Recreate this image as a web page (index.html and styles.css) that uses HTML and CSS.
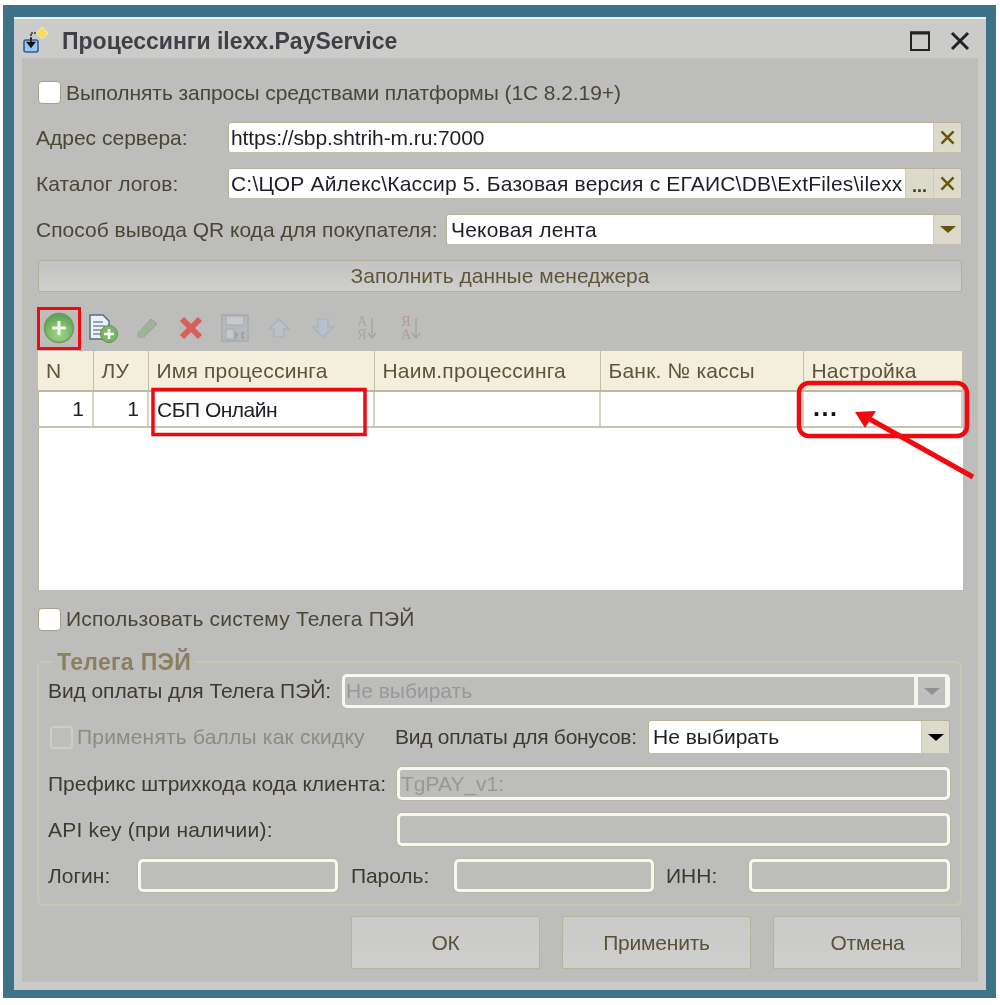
FILE: index.html
```html
<!DOCTYPE html>
<html lang="ru">
<head>
<meta charset="utf-8">
<title>Процессинги ilexx.PayService</title>
<link rel="stylesheet" href="styles.css">
</head>
<body>
<div class="shot">
  <div class="frame">
    <div class="window">
      <header class="titlebar">
        <svg class="title-icon" width="30" height="30" viewBox="0 0 30 30">
          <path d="M15 7h-5v7" fill="none" stroke="#333" stroke-width="1.6" stroke-dasharray="2 1"/>
          <rect x="3" y="14" width="14" height="12" rx="2" fill="#9cc4e8" stroke="#2b5f96" stroke-width="1.6"/>
          <path d="M10 12v7M6.500 16.500 10 21l3.500-4.500z" fill="#111" stroke="#111" stroke-width="1.400"/>
          <path d="M21 1l6 6-6 6-6-6z" fill="#f7dc5a" stroke="#efe9b8"/>
        </svg>
        <h1 class="title">Процессинги ilexx.PayService</h1>
        <svg class="win-btn" width="20" height="20" viewBox="0 0 20 20"><rect x="1" y="1.500" width="18" height="17.500" fill="none" stroke="#222" stroke-width="2"/><path d="M0 2h20" stroke="#222" stroke-width="3"/></svg>
        <svg class="win-btn" width="20" height="20" viewBox="0 0 20 20"><path d="M2 2l16 16M18 2 2 18" stroke="#222" stroke-width="3"/></svg>
      </header>
      <main class="panel">
        <label class="check-row first">
          <span class="check"></span><span class="cap sn1">Выполнять запросы средствами платформы (1С 8.2.19+)</span>
        </label>
        <div class="row r-addr">
          <span class="label w190">Адрес сервера:</span>
          <div class="field">
            <span class="value sn1">https://sbp.shtrih-m.ru:7000</span>
            <span class="f-btn"><svg width="15" height="15" viewBox="0 0 16 16"><path d="M1.500 1.500l13 13M14.500 1.500l-13 13" stroke="#6b5608" stroke-width="2.600"/></svg></span>
          </div>
        </div>
        <div class="row r-gap">
          <span class="label w190">Каталог логов:</span>
          <div class="field">
            <span class="value sp2">C:\ЦОР Айлекс\Кассир 5. Базовая версия с ЕГАИС\DB\ExtFiles\ilexx</span>
            <span class="f-btn dots">...</span>
            <span class="f-btn"><svg width="15" height="15" viewBox="0 0 16 16"><path d="M1.500 1.500l13 13M14.500 1.500l-13 13" stroke="#6b5608" stroke-width="2.600"/></svg></span>
          </div>
        </div>
        <div class="row r-gap">
          <span class="label w408">Способ вывода QR кода для покупателя:</span>
          <div class="field">
            <span class="value pad sp2">Чековая лента</span>
            <span class="f-btn"><i class="tri olive"></i></span>
          </div>
        </div>
        <button class="wide-btn">Заполнить данные менеджера</button>

        <div class="toolbar">
          <span class="tool">
            <svg width="32" height="32" viewBox="0 0 32 32"><defs><radialGradient id="gr" cx="50%" cy="70%" r="65%"><stop offset="0" stop-color="#a4d88c"/><stop offset="1" stop-color="#62a256"/></radialGradient></defs><circle cx="16" cy="16" r="14.500" fill="url(#gr)" stroke="#6d9a62" stroke-width="1.500"/><path d="M16 9v14M9 16h14" stroke="#f2f7ec" stroke-width="3"/></svg>
          </span>
          <span class="tool">
            <svg width="32" height="30" viewBox="0 0 32 30"><path d="M3 2h13l6 6v18H3z" fill="#eef1f3" stroke="#4f6f8f" stroke-width="1.500"/><path d="M6 9h10M6 13h12M6 17h9M6 21h9" stroke="#7d8a96" stroke-width="1.500"/><circle cx="22" cy="21" r="8.500" fill="#79b765" stroke="#5c8f50"/><path d="M22 16v10M17 21h10" stroke="#fff" stroke-width="2.600"/></svg>
          </span>
          <span class="tool">
            <svg width="24" height="24" viewBox="0 0 24 24"><path d="M3 17 16 3l6 5L9 21H3z" fill="#9fb39b" stroke="#93a58f"/><path d="M3 21h7" stroke="#a9a9a9" stroke-width="2"/></svg>
          </span>
          <span class="tool">
            <svg width="26" height="24" viewBox="0 0 26 24"><path d="M4 3l18 18M22 3 4 21" stroke="#d9605a" stroke-width="6"/></svg>
          </span>
          <span class="tool">
            <svg width="30" height="30" viewBox="0 0 30 30"><path d="M2 2h26v26H2z" fill="#b5b9bb" stroke="#a5aaad" stroke-width="1.500"/><path d="M6 3h18v9H6z" fill="#c6c8c9" stroke="#a5aaad"/><path d="M6 16h8v10H6z" fill="#c5c7c8" stroke="#a5aaad"/><path d="M16 19v7M22 19v7M16 22h2M24 19l-2 3 2 4" fill="none" stroke="#9b9fa2" stroke-width="1.500"/></svg>
          </span>
          <span class="tool">
            <svg width="24" height="22" viewBox="0 0 24 22"><path d="M12 2 22 12h-5v8H7v-8H2z" fill="#bac2c8" stroke="#aab3ba" stroke-width="1.500"/></svg>
          </span>
          <span class="tool">
            <svg width="24" height="22" viewBox="0 0 24 22"><path d="M12 20 22 10h-5V2H7v8H2z" fill="#b5c2cb" stroke="#a8b5be" stroke-width="1.500"/></svg>
          </span>
          <span class="tool sort"><span class="sort-l"><b>А</b><b>Я</b></span><svg width="10" height="24" viewBox="0 0 10 24"><path d="M5 2v20M1 17l4 5 4-5" fill="none" stroke="#a3a8a6" stroke-width="1.500"/></svg></span>
          <span class="tool sort rev"><span class="sort-l"><b>Я</b><b>А</b></span><svg width="10" height="24" viewBox="0 0 10 24"><path d="M5 2v20M1 17l4 5 4-5" fill="none" stroke="#a3a8a6" stroke-width="1.500"/></svg></span>
        </div>

        <table class="grid">
          <colgroup>
            <col class="c1"><col class="c2"><col class="c3"><col class="c4"><col class="c5"><col class="c6">
          </colgroup>
          <thead>
            <tr><th>N</th><th>ЛУ</th><th>Имя процессинга</th><th>Наим.процессинга</th><th>Банк. № кассы</th><th>Настройка</th></tr>
          </thead>
          <tbody>
            <tr><td class="num">1</td><td class="num">1</td><td class="name">СБП Онлайн</td><td></td><td></td><td class="more">...</td></tr>
          </tbody>
        </table>

        <label class="check-row second">
          <span class="check"></span><span class="sp2">Использовать систему Телега ПЭЙ</span>
        </label>

        <fieldset class="group">
          <legend>Телега ПЭЙ</legend>
          <div class="row g-first">
            <span class="label dark w294 sn1">Вид оплаты для Телега ПЭЙ:</span>
            <div class="field off select-off">
              <span class="value">Не выбирать</span>
              <span class="f-btn"><i class="tri gray"></i></span>
            </div>
          </div>
          <div class="row g-gap">
            <span class="check faded"></span>
            <span class="label fade w318 sp2">Применять баллы как скидку</span>
            <span class="label dark w253 sn2">Вид оплаты для бонусов:</span>
            <div class="field">
              <span class="value pad">Не выбирать</span>
              <span class="f-btn"><i class="tri black"></i></span>
            </div>
          </div>
          <div class="row g-gap g-h">
            <span class="label dark w349">Префикс штрихкода кода клиента:</span>
            <div class="field off"><span class="value">TgPAY_v1:</span></div>
          </div>
          <div class="row g-gap g-h">
            <span class="label dark w349 sp2">API key (при наличии):</span>
            <div class="field off"></div>
          </div>
          <div class="row g-gap g-h">
            <span class="label dark w90">Логин:</span>
            <div class="field off small"></div>
            <span class="label dark w103 ml sn1">Пароль:</span>
            <div class="field off small"></div>
            <span class="label dark w83 ml">ИНН:</span>
            <div class="field off small2"></div>
          </div>
        </fieldset>

        <div class="actions">
          <button class="act">ОК</button>
          <button class="act">Применить</button>
          <button class="act">Отмена</button>
        </div>
      </main>
    </div>
  </div>
  <svg class="notes" width="1000" height="1005" viewBox="0 0 1000 1005">
    <g fill="none" stroke="#f00a0f">
      <rect x="38.500" y="308.500" width="41" height="40" stroke-width="3"/>
      <rect x="153" y="389.500" width="212" height="45" stroke-width="3.500"/>
      <rect x="799" y="383" width="168" height="53" rx="10" stroke-width="4.500"/>
      <path d="M973 477 866 417" stroke-width="5"/>
    </g>
    <path d="M855 412l21-1-11 17z" fill="#f00a0f"/>
  </svg>
</div>
</body>
</html>
```
FILE: styles.css
```css
* { box-sizing: border-box; }
html, body { margin: 0; padding: 0; background: #fff; }
body { width: 1000px; height: 1005px; overflow: hidden; font-family: "Liberation Sans", Arial, sans-serif; font-size: 21px; color: #4b4534; }
.shot { position: relative; display: flow-root; width: 1000px; height: 1005px; filter: blur(0.5px); }
.frame { margin: 5px 4px 0 3px; height: 993px; border-style: solid; border-color: #3d7288; border-width: 12px 10px 8px 11px; }
.window { height: 100%; background: #cbcbca; border-top: 2px solid #eef1f1; display: flex; flex-direction: column; }
.titlebar { height: 39px; flex: none; display: flex; align-items: center; padding: 4px 16px 0 7px; }
.title-icon { flex: none; }
.title { flex: 1; margin: 2px 0 0 11px; font-size: 23px; font-weight: bold; color: #3f3f46; }
.win-btn { margin-left: 20px; flex: none; }
.panel { flex: 1; margin: 0 8px 8px; padding: 23px 16px 0; background: #bdbdbc; }

.sp2 { letter-spacing: .2px; }
.sn1 { letter-spacing: -.08px; }
.sn2 { letter-spacing: -.25px; }
.cap { margin-top: 2px; }

.check-row { display: flex; align-items: center; height: 22px; }
.check { flex: none; width: 23px; height: 23px; margin-right: 5px; background: #fff; border: 1px solid #a79f88; border-radius: 4px; }
.check.faded { background: #bdbdbc; border: 2px solid #cfcdbd; margin: 0 4px 0 2px; }
.check-row.second { margin-top: 17px; height: 24px; }

.row { display: flex; align-items: center; height: 31px; }
.r-addr { margin-top: 19px; }
.r-gap { margin-top: 15px; }
.label { flex: none; white-space: nowrap; margin-left: -2px; margin-right: 2px; }
.w190 { width: 190px; }
.w408 { width: 408px; }
.w294 { width: 294px; margin-left: 0; margin-right: 0; }
.w318 { width: 318px; margin-left: 0; margin-right: 0; }
.w253 { width: 253px; margin-left: 0; margin-right: 0; }
.w349 { width: 349px; margin-left: 0; margin-right: 0; }
.w90 { width: 90px; margin-left: 0; margin-right: 0; }
.w103 { width: 103px; margin-left: 0; margin-right: 0; }
.w83 { width: 83px; margin-left: 0; margin-right: 0; }
.label.ml { margin-left: 13px; }
.label.w83.ml { margin-left: 12px; }
.dark { color: #3f3a2e; }
.fade { color: #8f8b7c; }

.field { flex: 1; min-width: 0; height: 100%; display: flex; align-items: center; background: #fff; border: 1px solid #b8b398; border-bottom-color: #c2beaa; border-radius: 3px; overflow: hidden; }
.value { flex: 1; min-width: 0; padding-left: 2px; color: #1c1f24; white-space: nowrap; overflow: hidden; }
.value.pad { padding-left: 4px; }
.f-btn { flex: none; width: 28px; height: 100%; display: flex; align-items: center; justify-content: center; background: #dcdacb; border-left: 1px solid #cfcab2; }
.f-btn.dots { color: #3f3a2e; font-weight: bold; font-size: 18px; padding-top: 6px; }
.tri { display: block; width: 0; height: 0; border-style: solid; border-width: 7px 8px 0; border-color: transparent; }
.tri.olive { border-top-color: #65550c; }
.tri.gray { border-top-color: #8f9293; }
.tri.black { border-top-color: #000; }

.wide-btn { display: block; width: 100%; height: 32px; margin: 15px 0 0; padding: 0; font: inherit; color: #5f5639; border: 1px solid #b3af98; border-radius: 2px; background: linear-gradient(#c3c3c2, #cfcfce); }

.toolbar { display: flex; align-items: center; height: 42px; margin: 15px 0 0 -1px; }
.tool { flex: none; width: 44px; height: 42px; display: flex; align-items: center; justify-content: center; }
.sort { color: #a9a7a0; font-family: "Liberation Serif", serif; }
.sort.rev { color: #b59a9a; }
.sort-l { display: flex; flex-direction: column; align-items: center; }
.sort-l b { display: block; font-weight: normal; font-size: 14px; line-height: 13px; }

.grid { width: 924px; height: 239px; margin-top: 2px; table-layout: fixed; border-collapse: collapse; background: #fff; box-shadow: inset 1px 0 0 #b7b39c; }
.c1, .c2 { width: 55px; }
.c3, .c4 { width: 226px; }
.c5 { width: 203px; }
.c6 { width: 159px; }
.grid th { height: 40px; padding: 0 0 0 8px; font-weight: normal; letter-spacing: .2px; text-align: left; color: #5e5539; background: #f4efdc; border-right: 1px solid #c4c0a6; border-bottom: 2px solid #bdb9a0; white-space: nowrap; }
.grid td { height: 36px; padding: 0 0 0 8px; color: #1c1f24; border-right: 2px solid #d6d3c1; border-bottom: 2px solid #c6c3af; vertical-align: middle; white-space: nowrap; }
.grid tbody tr { height: 36px; }
.grid tbody::after { content: ""; display: table-row; height: 163px; }
.grid td.num { text-align: right; padding: 0 8px 0 0; }
.grid td.name { letter-spacing: -.5px; padding-top: 2px; }
.grid td.more { font-weight: bold; color: #111; font-size: 25px; letter-spacing: 1.500px; line-height: 14px; padding: 0 0 5px 9px; }

.group { margin: 18px 0 0 -1px; width: 925px; height: 257px; padding: 0 10px 0 9px; border: 2px solid #c9c6b0; border-radius: 7px; }
.group legend { margin-left: 5px; padding: 0 4px; font-weight: bold; font-size: 23px; letter-spacing: .3px; line-height: 26px; color: #8b7f5d; }
.g-first { height: 34px; margin-top: -1px; }
.g-gap { height: 34px; margin-top: 12px; }
.g-h { height: 33px; margin-top: 13px; }
.select-off { background: #bdbdbc; border: 4px solid #f6f5ea; border-right-width: 0; border-radius: 0; box-shadow: none; }
.select-off .value { padding-left: 1px; }
.select-off .f-btn { width: 33px; margin: -4px 0; height: 34px; border: 2px solid #f6f5ea; border-left: 4px solid #f6f5ea; background: #bfbfbe; }
.off { background: #bdbdbc; border: 3px solid #f8f8f2; border-radius: 5px; box-shadow: 0 0 0 1px #bab69f; }
.select-off { box-shadow: none; }
.off .value { color: #989898; padding-left: 1px; }
.small { flex: none; width: 200px; }
.small2 { flex: none; width: 201px; }

.actions { display: flex; justify-content: flex-end; gap: 22px; margin-top: 10px; }
.act { flex: none; width: 189px; height: 53px; padding: 0; font: inherit; letter-spacing: -.2px; color: #5a5236; border: 1px solid #b6b29b; border-radius: 2px; background: linear-gradient(#c9c9c8, #cfcfce); }

.notes { position: absolute; left: 0; top: 0; pointer-events: none; }
```
